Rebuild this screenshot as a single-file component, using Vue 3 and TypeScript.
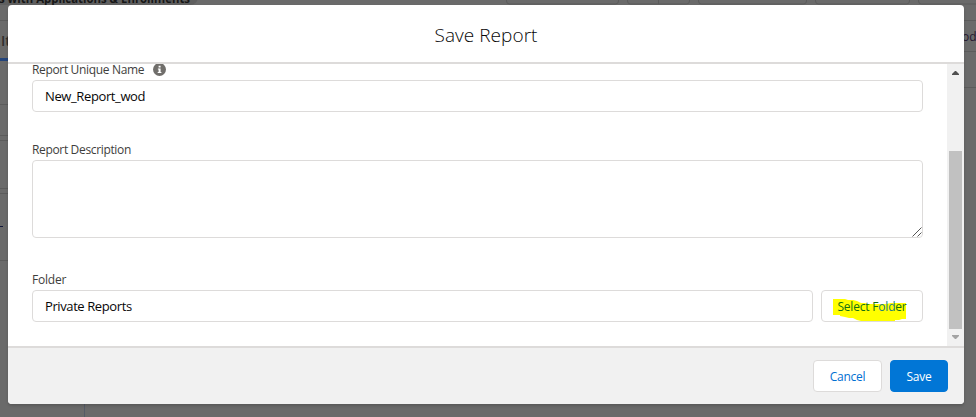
<script setup lang="ts">
import { ref } from 'vue'

const uniqueName = ref('New_Report_wod')
const description = ref('')
const folder = ref('Private Reports')
</script>

<template>
  <div class="page">
    <svg class="backdrop" width="976" height="417" viewBox="0 0 976 417" aria-hidden="true">
      <rect width="976" height="417" fill="#6a6a6a" />
      <rect x="-10" y="-14" width="208" height="19" rx="8" fill="#5f5f5f" />
      <text x="-1" y="3" class="page-title" textLength="191" lengthAdjust="spacingAndGlyphs">s with Applications &amp; Enrollments</text>
      <g fill="none" stroke="#5b5b5b">
        <rect x="506.500" y="-20" width="112" height="24" rx="3" />
        <rect x="627.500" y="-20" width="62" height="24" rx="3" />
        <path d="M658.500 0V4M0 20.500H8M0 104.500H8M0 135.500H8M0 140.500H8M0 188.500H8M0 193.500H8M0 260.500H8M964 20.500H976M964 51.500H976M964 87.500H976" />
        <rect x="698.500" y="-20" width="108" height="24" rx="3" />
        <rect x="815.500" y="-20" width="94" height="24" rx="3" />
        <rect x="918.500" y="-20" width="80" height="24" rx="3" />
      </g>
      <text x="1" y="46" class="tab">It</text>
      <rect y="58" width="8" height="3" fill="#23447a" />
      <path d="M0 226.500H3" stroke="#10163a" />
      <path d="M84.500 404V417" stroke="#555b66" />
      <text x="962" y="41" class="side">od</text>
    </svg>

    <section class="modal" role="dialog" aria-label="Save Report">
      <header class="head"><h1>Save Report</h1></header>
      <div class="body">
        <div class="form">
          <div class="label first">
            <span class="l1">Report Unique Name</span>
            <svg class="info" width="13" height="13" viewBox="0 0 13 13">
              <circle cx="6.500" cy="6.500" r="6.500" fill="#706e6b" />
              <path d="M5.600 2.700h2v1.700h-2zM4.900 5.400h2.700v3.500h.8v1H4.700v-1h.9V6.400h-.7z" fill="#fff" />
            </svg>
          </div>
          <input v-model="uniqueName" class="field name" />
          <label class="label desc">Report Description</label>
          <div class="area">
            <textarea v-model="description" class="field"></textarea>
            <svg class="grip" width="10" height="10" viewBox="0 0 10 10">
              <path d="M.5 9.500L9.500 .5M5.500 9.500L9.500 5.500" stroke="#555" fill="none" />
            </svg>
          </div>
          <label class="label fold">Folder</label>
          <div class="row">
            <input v-model="folder" class="field priv" />
            <button class="btn select">
              <svg class="marker" width="73" height="23" viewBox="0 0 73 23">
                <path d="M0 0H12L15 1H20L24 2L28 4H32L34 5H53L58 4H73V20H69L66 21H62V22H28L24 21L20 19H16L12 18L7 17V16H0Z" fill="#ff0" />
              </svg>
              <span class="ts">Select F<span class="blue">old</span>er</span>
            </button>
          </div>
        </div>
        <div class="scroll">
          <svg width="17" height="17" viewBox="0 0 17 17"><path d="M5 11V10L8 7H9L12 10V11Z" fill="#505050" /></svg>
          <div class="thumb"></div>
          <svg class="down" width="17" height="17" viewBox="0 0 17 17"><path d="M5 6V7L8 10H9L12 7V6Z" fill="#a3a3a3" /></svg>
        </div>
      </div>
      <footer class="foot">
        <button class="btn cancel"><span>Cancel</span></button>
        <button class="btn save"><span>Save</span></button>
      </footer>
    </section>
  </div>
</template>

<style>
body { margin: 0; overflow: hidden; }
</style>

<style scoped>
* { box-sizing: border-box; }
.page { position: relative; width: 976px; height: 417px; padding: 5px 12px 13px 8px; overflow: hidden; font-family: "Segoe UI", "Open Sans", "Noto Sans", sans-serif; }
.backdrop { position: absolute; inset: 0; }
.page-title { font-size: 12px; font-weight: 700; fill: #171717; }
.tab { font-size: 14px; font-weight: 600; fill: #302e2c; }
.side { font-size: 12px; fill: #25172f; }
.modal { position: relative; display: flex; flex-direction: column; width: 956px; height: 399px; background: #fff; border-radius: 4px; overflow: hidden; box-shadow: 0 2px 3px rgba(0, 0, 0, .16); }
.head { flex: none; height: 59px; border-bottom: 2px solid #dddbda; display: flex; justify-content: center; align-items: center; }
h1 { margin: 3px 0 0; font-size: 19px; line-height: 25px; font-weight: 350; letter-spacing: .05px; color: #080707; }
.body { flex: none; height: 282px; display: flex; overflow: hidden; }
.form { width: 939px; padding: 0 24px; display: flex; flex-direction: column; }
.label { flex: none; height: 16px; font-size: 12px; line-height: 16px; color: #3e3e3c; letter-spacing: -.34px; font-weight: 380; }
.first { display: flex; height: 16px; }
.first .l1 { line-height: 12px; }
.info { margin: -1px 0 0 9px; }
.field { display: block; width: 100%; margin: 0; border: 1px solid #dddbda; border-radius: 4px; background: #fff; font: 13px/20px "Segoe UI", "Open Sans", "Noto Sans", sans-serif; font-weight: 370; color: #080707; padding: 0 12px; outline: none; resize: none; }
.name, .priv { height: 32px; padding-bottom: 1px; }
.name { letter-spacing: -.38px; }
.priv { letter-spacing: -.4px; }
.desc { margin-top: 30px; height: 18px; }
.area { position: relative; height: 78px; }
.area .field { height: 78px; }
.grip { position: absolute; right: 1px; bottom: 1px; }
.fold { margin-top: 34px; height: 18px; letter-spacing: -.2px; }
.row { display: flex; gap: 8px; }
.priv { width: 781px; }
.btn { display: flex; align-items: center; justify-content: center; flex: none; height: 32px; padding: 0; border: 1px solid #dddbda; border-radius: 4px; background: #fff; color: #0070d2; font: 13px/20px "Segoe UI", "Open Sans", "Noto Sans", sans-serif; white-space: nowrap; }
.select { position: relative; width: 102px; }
.marker { position: absolute; left: 11px; top: 8px; }
.ts { position: relative; top: 1px; color: #137013; font-size: 12px; letter-spacing: -.2px; }
.blue { color: #147b88; }
.scroll { width: 17px; background: #f1f1f1; display: flex; flex-direction: column; align-items: center; }
.scroll svg { flex: none; display: block; }
.thumb { width: 13px; height: 178px; margin-top: 70px; background: #c1c1c1; }
.foot { height: 58px; flex: none; border-top: 2px solid #dddbda; background: #f1f1f1; display: flex; justify-content: flex-end; align-items: flex-start; gap: 8px; padding: 12px 16px; }
.cancel { width: 69px; font-size: 12px; letter-spacing: -.25px; }
.save { width: 58px; background: #0176d6; border-color: #0176d6; color: #fff; font-size: 12px; letter-spacing: -.2px; }
.foot span { position: relative; top: 1px; }
</style>
